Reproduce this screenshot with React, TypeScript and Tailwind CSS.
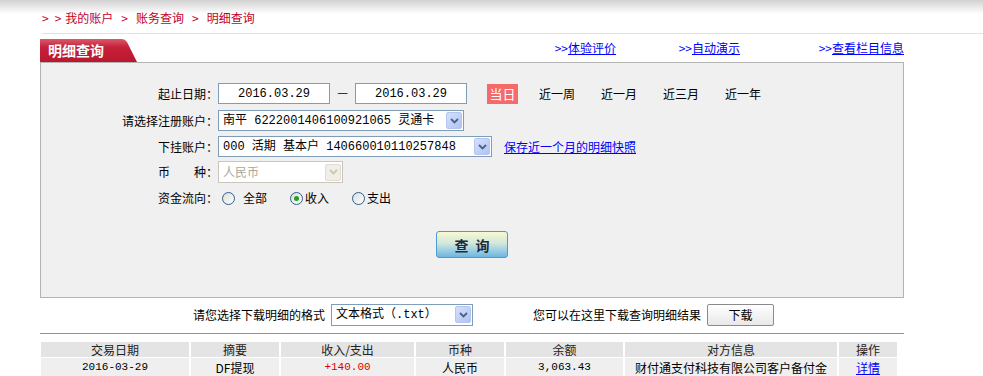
import React from "react";

const mono = "font-['Liberation_Mono','Noto_Sans_CJK_SC',monospace]";

function Chevron({ color }: { color: string }) {
  return (
    <svg width="9" height="6" viewBox="0 0 9 6">
      <path d="M1 1 L4.5 4.5 L8 1" fill="none" stroke={color} strokeWidth="1.8" />
    </svg>
  );
}

function Select({ className, text, disabled }: { className: string; text: string; disabled?: boolean }) {
  return (
    <div
      className={`${className} flex items-center border ${
        disabled ? "border-[#c9c7ba] bg-white text-[#aca899]" : "border-[#7f9db9] bg-white text-black"
      }`}
    >
      <span className={`flex-1 truncate pl-[4px] ${disabled ? "" : mono}`}>{text}</span>
      {disabled ? (
        <span className="mr-[1px] flex h-[17px] w-[16px] items-center justify-center rounded-[2px] border border-[#e0ddd0] bg-[#f0eee6]">
          <Chevron color="#c9c7ba" />
        </span>
      ) : (
        <span className="mr-[1px] flex h-[17px] w-[16px] items-center justify-center rounded-[2px] border border-[#b4c6f0] bg-[linear-gradient(135deg,#d4e0fd,#b0c3f3)]">
          <Chevron color="#4d6185" />
        </span>
      )}
    </div>
  );
}

function Radio({ checked }: { checked?: boolean }) {
  return (
    <span className="flex h-[13px] w-[13px] shrink-0 items-center justify-center rounded-full border border-[#2f5f8e] bg-[linear-gradient(135deg,#dcdcd7,#ffffff)]">
      {checked && <span className="h-[5px] w-[5px] rounded-full bg-[#21a121]" />}
    </span>
  );
}

function Row({ label, className, children }: { label: string; className: string; children: React.ReactNode }) {
  return (
    <div className={`flex items-center ${className}`}>
      <div className="w-[177px] text-right">{label}</div>
      {children}
    </div>
  );
}

const cols = ["交易日期", "摘要", "收入/支出", "币种", "余额", "对方信息", "操作"];

export default function App() {
  return (
    <div className="min-h-[376px] w-full bg-white bg-[linear-gradient(#d2d2d2,#ffffff_14px)] bg-no-repeat font-['Noto_Sans_CJK_SC',sans-serif] text-[12px] leading-[16px] text-black">
      <div className="flex pl-[42px] pt-[10px] text-[#c4002b]">
        <span className="mr-[6px]">&gt;</span>
        <span className="mr-[4px]">&gt;</span>
        <span>我的账户</span>
        <span className="mx-[8px]">&gt;</span>
        <span>账务查询</span>
        <span className="mx-[8px]">&gt;</span>
        <span>明细查询</span>
      </div>
      <div className="ml-[42px] mt-[7px] h-[1px] bg-[#e3e3e3]" />

      <div className="ml-[40px] w-[864px]">
        <div className="mt-[5px] flex h-[23px]">
          <div className="relative w-[97px]">
            <svg className="absolute inset-0" width="97" height="23" viewBox="0 0 97 23">
              <defs>
                <linearGradient id="tabg" x1="0" y1="0" x2="0" y2="1">
                  <stop offset="0" stopColor="#dc5a68" />
                  <stop offset="0.35" stopColor="#c5213a" />
                  <stop offset="1" stopColor="#bb1830" />
                </linearGradient>
              </defs>
              <path d="M0 0 H82 Q85 0 87 3 L97 23 H0 Z" fill="url(#tabg)" />
            </svg>
            <span className="relative block pl-[8px] pt-[2px] text-[14px] font-bold leading-[19px] text-white">明细查询</span>
          </div>
          <div className="ml-[419px] flex whitespace-nowrap pt-[1px] text-[#0000ff]">
            <span className="w-[124px]">
              &gt;&gt;<span className="underline">体验评价</span>
            </span>
            <span className="w-[140px]">
              &gt;&gt;<span className="underline">自动演示</span>
            </span>
            <span>
              &gt;&gt;<span className="underline">查看栏目信息</span>
            </span>
          </div>
        </div>

        <div className="h-[236px] border border-[#b4b4b4] bg-[#f0f0f0] pt-[20px]">
          <Row label="起止日期：" className="h-[21px]">
            <div className={`flex h-[21px] w-[112px] items-center justify-center border border-[#7f9db9] bg-white ${mono}`}>
              2016.03.29
            </div>
            <span className="w-[25px] pb-[3px] text-center">—</span>
            <div className={`flex h-[21px] w-[112px] items-center justify-center border border-[#7f9db9] bg-white ${mono}`}>
              2016.03.29
            </div>
            <span className="ml-[20px] flex h-[20px] w-[31px] items-center justify-center bg-[#f76a6a] text-[13px] text-white">
              当日
            </span>
            <div className="ml-[21px] flex gap-[26px]">
              <span className="w-[36px]">近一周</span>
              <span className="w-[36px]">近一月</span>
              <span className="w-[36px]">近三月</span>
              <span className="w-[36px]">近一年</span>
            </div>
          </Row>
          <Row label="请选择注册账户：" className="mt-[6px] h-[21px]">
            <Select className="h-[21px] w-[246px]" text="南平 6222001406100921065 灵通卡" />
          </Row>
          <Row label="下挂账户：" className="mt-[5px] h-[21px]">
            <Select className="h-[21px] w-[274px]" text="000 活期 基本户 140660010110257848" />
            <span className="ml-[12px] text-[#0000ff] underline">保存近一个月的明细快照</span>
          </Row>
          <Row label="币　　种：" className="mt-[4px] h-[22px]">
            <Select className="h-[22px] w-[125px]" text="人民币" disabled />
          </Row>
          <Row label="资金流向：" className="mt-[7px] h-[16px]">
            <div className="ml-[4px] flex items-center">
              <Radio />
              <span className="ml-[8px]">全部</span>
              <span className="ml-[23px]" />
              <Radio checked />
              <span className="ml-[2px]">收入</span>
              <span className="ml-[23px]" />
              <Radio />
              <span className="ml-[2px]">支出</span>
            </div>
          </Row>
          <div className="mx-auto mt-[25px] flex h-[27px] w-[72px] items-center justify-center gap-[7px] rounded-[3px] border border-[#4b9bd3] bg-[linear-gradient(#f6f9d0,#d2e7dc_45%,#6cb6e4)] text-[14px] font-bold text-[#1d2b3a]">
            <span>查</span>
            <span>询</span>
          </div>
        </div>

        <div className="mt-[5px] flex h-[23px] items-center pl-[153px]">
          <span>请您选择下载明细的格式</span>
          <Select className="ml-[6px] h-[22px] w-[142px]" text="文本格式（.txt）" />
          <span className="ml-[60px]">您可以在这里下载查询明细结果</span>
          <span className="ml-[6px] flex h-[22px] w-[67px] items-center justify-center rounded-[2px] border border-[#8a8a8a] bg-[linear-gradient(#ffffff,#e8e8e8)]">
            下载
          </span>
        </div>

        <div className="mt-[7px] h-[1px] bg-[#ee6b6b]" />

        <div className="ml-[1px] mt-[8px] grid w-[856px] grid-cols-[148px_88px_133px_88px_117px_212px_58px] gap-x-[2px] gap-y-[1px]">
          {cols.map((c) => (
            <div key={c} className="h-[15px] bg-[#e4e4e4] text-center leading-[15px] text-[#222]">
              {c}
            </div>
          ))}
          <div className={`h-[19px] bg-[#efefef] text-center text-[11px] leading-[19px] ${mono}`}>2016-03-29</div>
          <div className="h-[19px] bg-[#efefef] text-center leading-[19px]">DF提现</div>
          <div className={`h-[19px] bg-[#efefef] text-center text-[11px] leading-[19px] text-[#dd0000] ${mono}`}>+140.00</div>
          <div className="h-[19px] bg-[#efefef] text-center leading-[19px]">人民币</div>
          <div className={`h-[19px] bg-[#efefef] text-center text-[11px] leading-[19px] ${mono}`}>3,063.43</div>
          <div className="h-[19px] bg-[#efefef] text-center leading-[19px]">财付通支付科技有限公司客户备付金</div>
          <div className="h-[19px] bg-[#efefef] text-center leading-[19px] text-[#0000ff] underline">详情</div>
        </div>
      </div>
    </div>
  );
}
